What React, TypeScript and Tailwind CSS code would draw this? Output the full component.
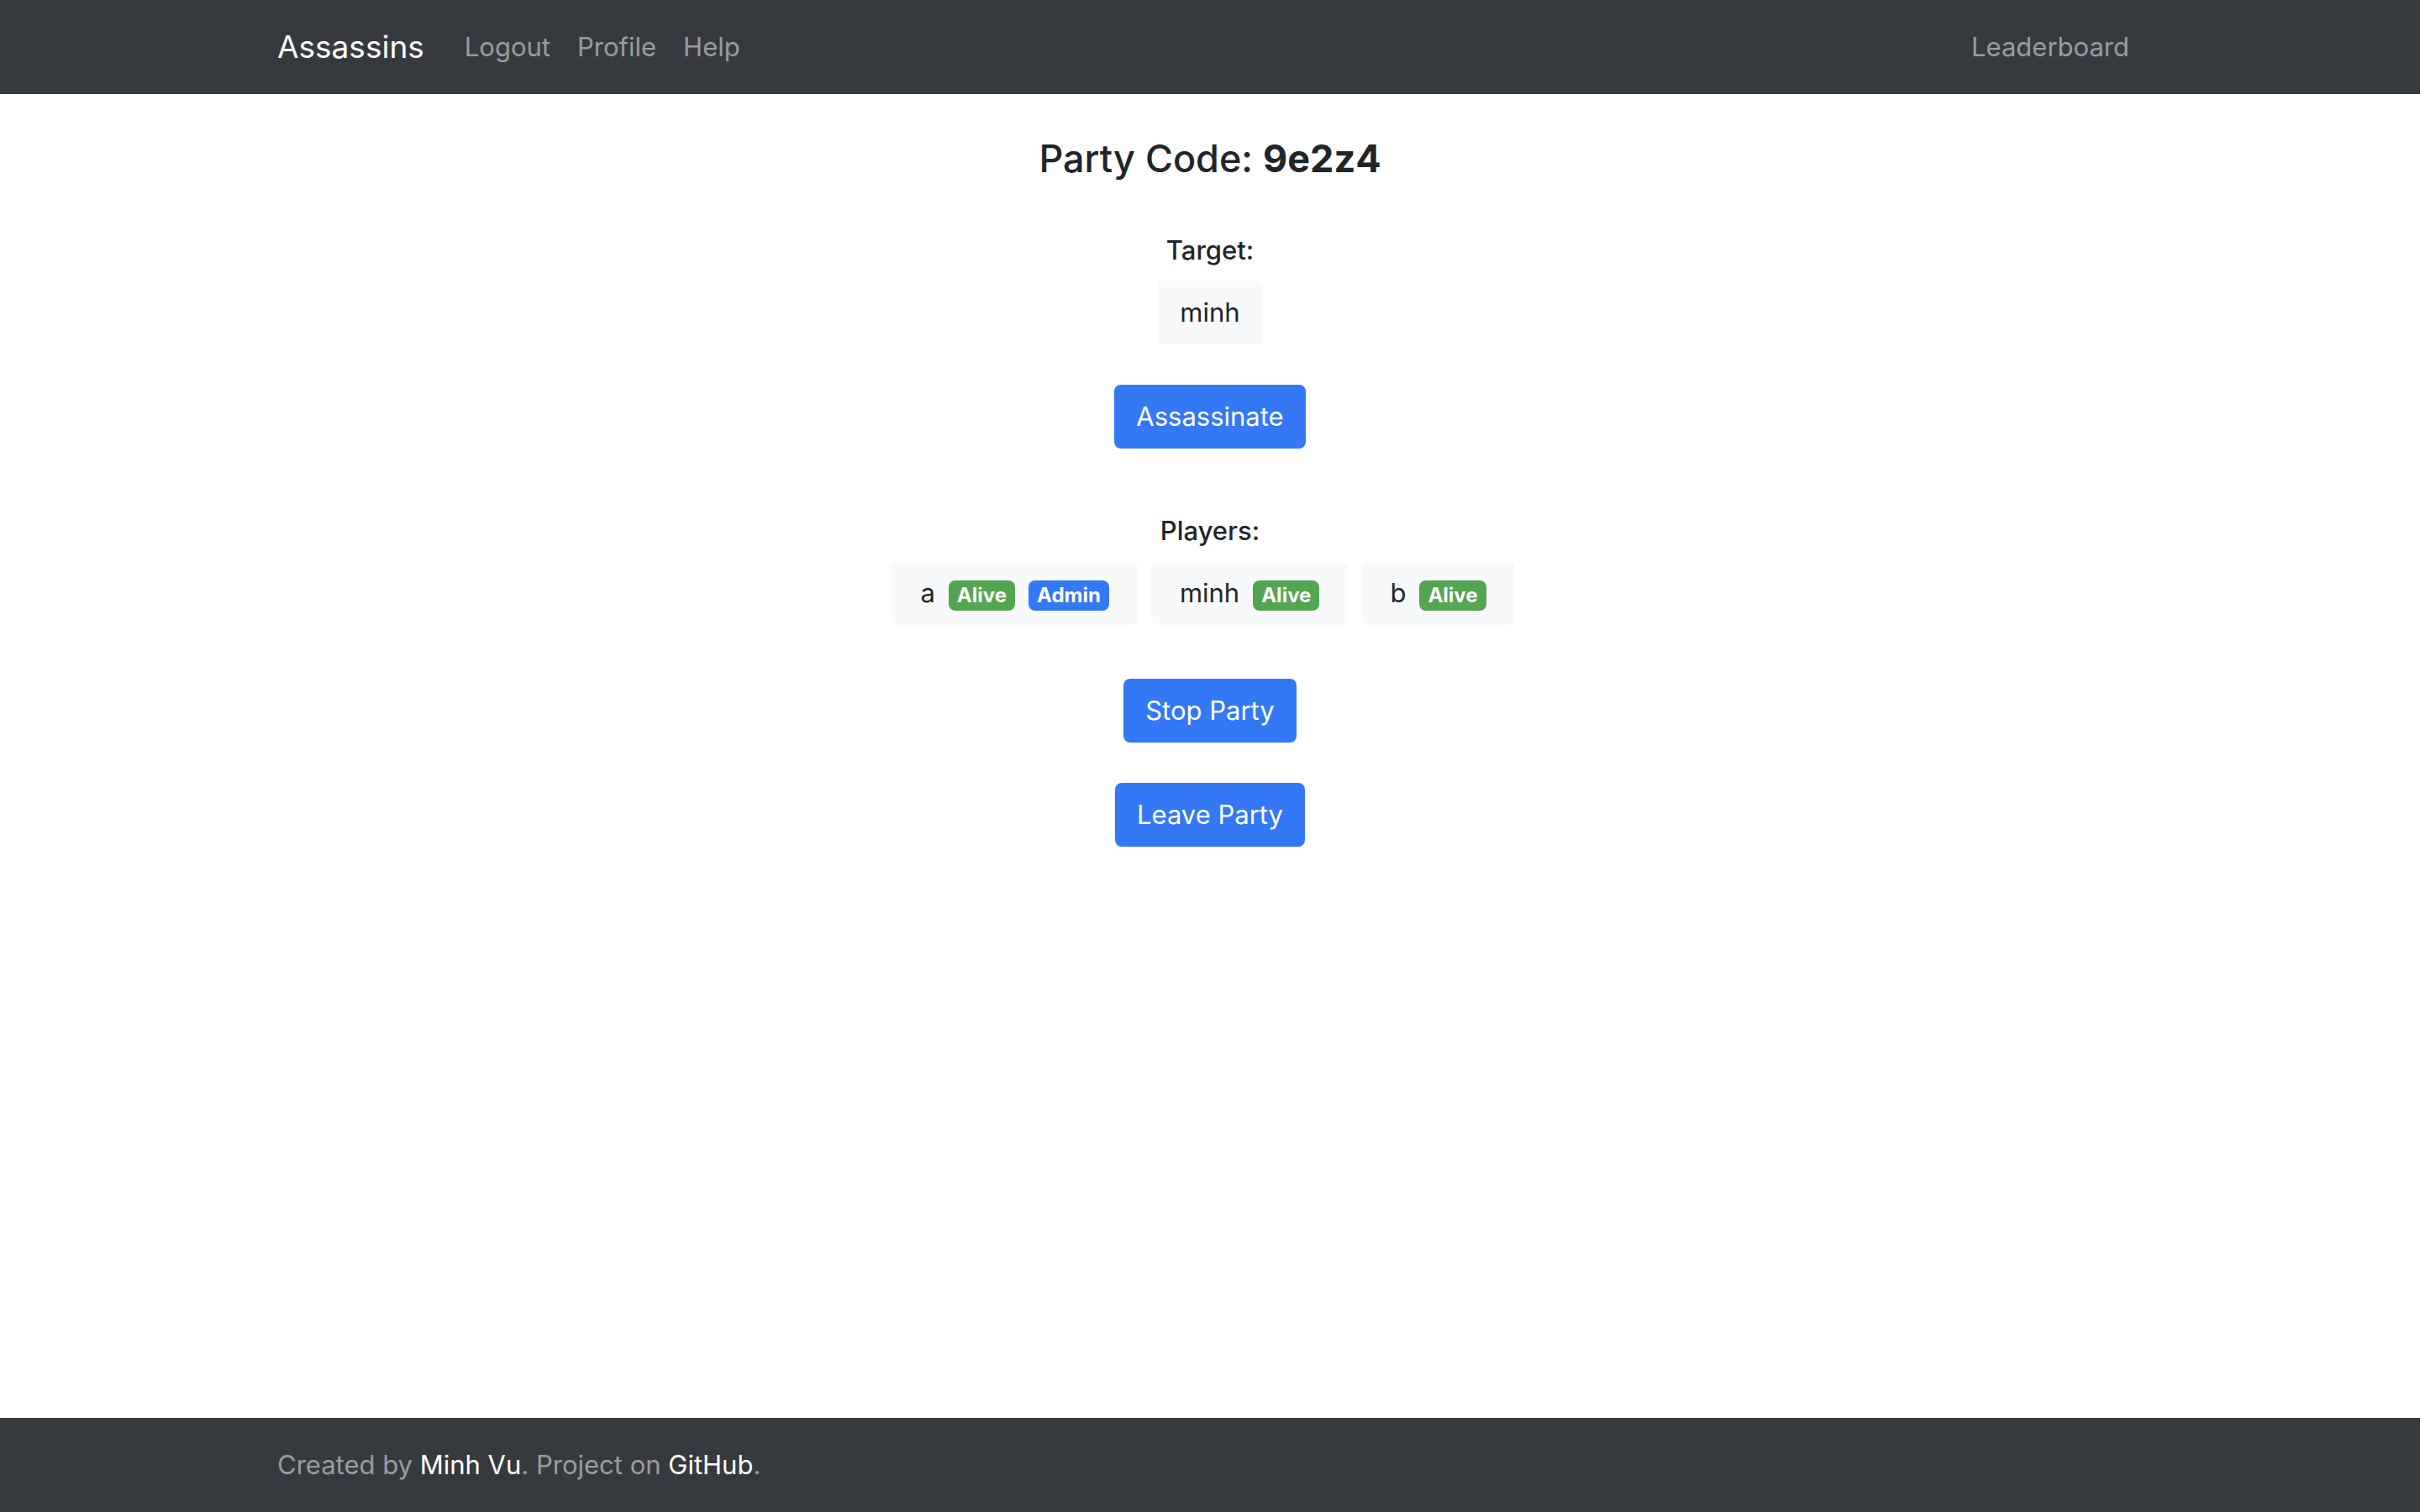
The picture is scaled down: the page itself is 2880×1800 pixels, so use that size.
import type { ReactNode } from "react";

function NavLink({ children }: { children: ReactNode }) {
  return (
    <a href="#" className="px-4 py-4 text-[#999c9f]">
      {children}
    </a>
  );
}

function Action({ children }: { children: ReactNode }) {
  return (
    <button type="button" className="rounded-lg bg-[#3478f6] px-[26px] py-[14px] text-white">
      {children}
    </button>
  );
}

const players = [
  { name: "a", admin: true },
  { name: "minh", admin: false },
  { name: "b", admin: false },
];

function Badge({ children, className }: { children: ReactNode; className: string }) {
  return (
    <span className={`rounded-lg px-[10px] py-[6px] text-[24px] leading-[24px] font-bold text-white ${className}`}>
      {children}
    </span>
  );
}

export default function App() {
  return (
    <div className="flex min-h-screen flex-col bg-white font-['Inter',sans-serif] text-[31px] leading-[48px] text-[#212529]">
      <header className="bg-[#363a3e] py-4">
        <nav className="mx-auto flex max-w-[2220px] items-center">
          <a href="#" className="mr-8 text-[37px] leading-[60px] text-white">Assassins</a>
          <NavLink>Logout</NavLink>
          <NavLink>Profile</NavLink>
          <NavLink>Help</NavLink>
          <div className="ml-auto flex">
            <NavLink>Leaderboard</NavLink>
          </div>
        </nav>
      </header>
      <main className="flex grow flex-col items-center pt-12">
        <h1 className="text-[45px] leading-[58px] font-medium">
          Party Code: <strong className="font-bold">9e2z4</strong>
        </h1>
        <h2 className="mt-14 font-medium">Target:</h2>
        <div className="mt-3 rounded-lg bg-[#f8f9fb] px-[26px] py-[14px]">minh</div>
        <div className="mt-12">
          <Action>Assassinate</Action>
        </div>
        <h2 className="mt-[74px] font-medium">Players:</h2>
        <ul className="mt-3 flex flex-wrap justify-center">
          {players.map((p) => (
            <li key={p.name} className="mr-4 flex items-baseline gap-4 rounded-lg bg-[#f8f9fb] px-[34px] py-[14px]">
              <span>{p.name}</span>
              <Badge className="bg-[#53a551]">Alive</Badge>
              {p.admin && <Badge className="bg-[#3478f6]">Admin</Badge>}
            </li>
          ))}
        </ul>
        <div className="mt-16">
          <Action>Stop Party</Action>
        </div>
        <div className="mt-12">
          <Action>Leave Party</Action>
        </div>
      </main>
      <footer className="bg-[#363a3e] py-8">
        <p className="mx-auto max-w-[2220px] text-[#999c9f]">
          Created by <a href="#" className="text-white">Minh Vu</a>. Project on <a href="#" className="text-white">GitHub</a>.
        </p>
      </footer>
    </div>
  );
}
